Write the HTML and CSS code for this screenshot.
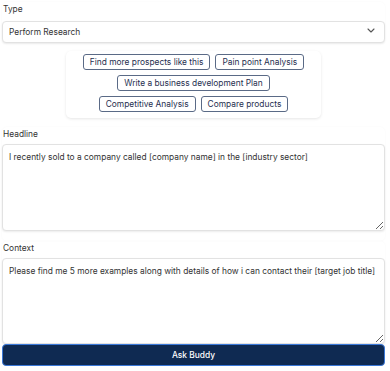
FILE: index.html
```html
<!DOCTYPE html>
<html lang="en">
<head>
    <meta charset="UTF-8">
    <meta name="viewport" content="width=device-width, initial-scale=1.0">
    <title>Ask Buddy</title>
    <link rel="stylesheet" href="styles.css">
</head>
<body>
    <div class="app-wrap">
        <div class="field">
            <label class="field-label" for="type">Type</label>
            <div class="select-wrap">
                <select id="type" class="select-box">
                    <option>Perform Research</option>
                </select>
                <svg class="chevron" width="8" height="5" viewBox="0 0 8 5"><path d="M1 1l3 3 3-3" fill="none" stroke="#555" stroke-width="1.1" stroke-linecap="round" stroke-linejoin="round"/></svg>
            </div>
        </div>

        <div class="prompts">
            <div class="prompt-row">
                <button class="chip">Find more prospects like this</button>
                <button class="chip">Pain point Analysis</button>
            </div>
            <div class="prompt-row">
                <button class="chip">Write a business development Plan</button>
            </div>
            <div class="prompt-row">
                <button class="chip">Competitive Analysis</button>
                <button class="chip">Compare products</button>
            </div>
        </div>

        <div class="field">
            <label class="field-label" for="headline">Headline</label>
            <textarea id="headline" class="text-box">I recently sold to a company called [company name] in the [industry sector]</textarea>
        </div>

        <div class="field">
            <label class="field-label" for="context">Context</label>
            <textarea id="context" class="text-box">Please find me 5 more examples along with details of how i can contact their [target job title]</textarea>
        </div>

        <button class="ask-btn">Ask Buddy</button>
    </div>
</body>
</html>
```

FILE: styles.css
```css
* {
  margin: 0;
  padding: 0;
  box-sizing: border-box;
}

body {
  font-family: Inter, "Noto Sans", sans-serif;
  background-color: #ffffff;
  color: #222;
}

.app-wrap {
  padding: 2px 5px 0 2px;
  display: flex;
  flex-direction: column;
}

.field {
  display: flex;
  flex-direction: column;
  border-radius: 5px;
  box-shadow: 0 0 2px rgba(0, 0, 0, 0.04);
}

.field-label {
  font-size: 8.4px;
  color: #333;
  padding: 1px 1px 4px;
  line-height: 12px;
}

.select-wrap {
  position: relative;
}

.select-box {
  appearance: none;
  width: 100%;
  height: 22px;
  padding: 0 6px;
  font-family: inherit;
  font-size: 8.4px;
  color: #333;
  background-color: #fff;
  border: 1px solid #e2e2e2;
  border-radius: 4px;
  box-shadow: 0 1px 2px rgba(0, 0, 0, 0.08);
  outline: none;
}

.chevron {
  position: absolute;
  right: 10px;
  top: 9px;
}

.prompts {
  align-self: center;
  width: 255px;
  margin: 8px 0 9px;
  padding: 3px 0 6px;
  display: flex;
  flex-direction: column;
  gap: 5px;
  background-color: #fff;
  border-radius: 5px;
  box-shadow: 0 1px 3px rgba(0, 0, 0, 0.1);
}

.prompt-row {
  display: flex;
  justify-content: center;
  gap: 5px;
}

.chip {
  height: 16px;
  padding: 0 6px;
  font-family: inherit;
  font-size: 8.4px;
  color: #1f2f4f;
  background-color: #fff;
  border: 1px solid #5a6a86;
  border-radius: 3px;
}

.text-box {
  width: 100%;
  height: 87px;
  padding: 6px 6px;
  font-family: inherit;
  font-size: 8.4px;
  line-height: 12px;
  color: #333;
  background-color: #fff;
  border: 1px solid #e2e2e2;
  border-radius: 4px;
  box-shadow: 0 1px 2px rgba(0, 0, 0, 0.08);
  resize: vertical;
  outline: none;
  margin-bottom: 10px;
}

#context {
  margin-bottom: 0;
  height: 86px;
}

.ask-btn {
  height: 22px;
  font-family: inherit;
  font-size: 8.4px;
  font-weight: 500;
  color: #fff;
  background-color: #0f2a52;
  border: 1px solid #3a78d8;
  border-radius: 4px;
}
```
